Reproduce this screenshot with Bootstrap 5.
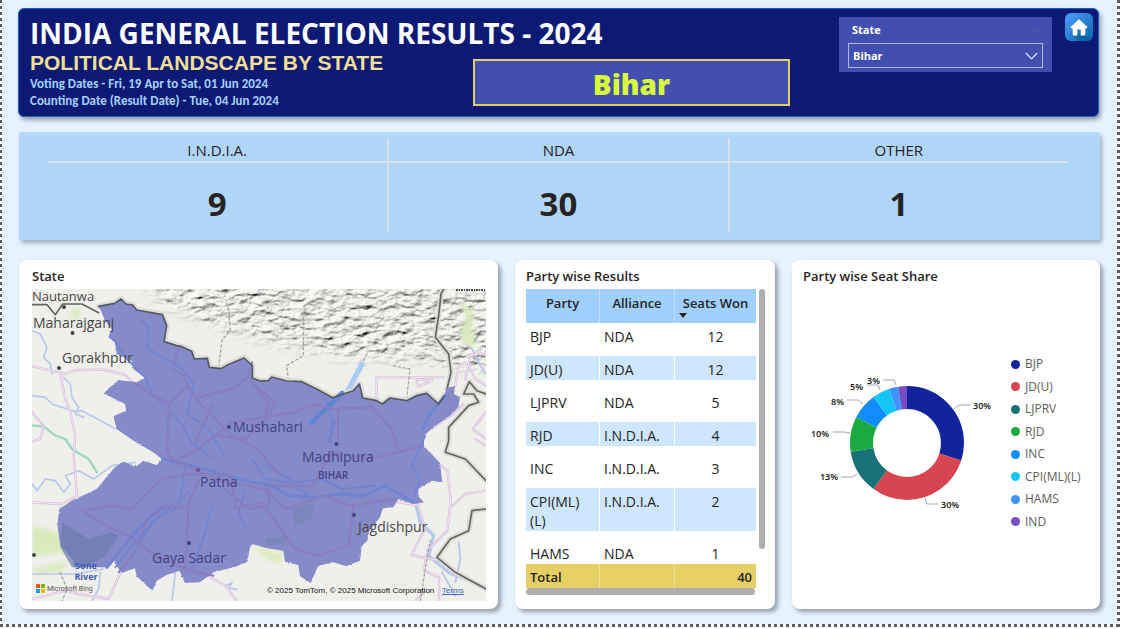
<!DOCTYPE html>
<html lang="en">
<head>
<meta charset="utf-8">
<meta name="viewport" content="width=device-width, initial-scale=1">
<title>India General Election Results - 2024</title>
<link href="https://cdn.jsdelivr.net/npm/bootstrap@5.3.0/dist/css/bootstrap.min.css" rel="stylesheet">
<style>
  body { font-family: "Open Sans", "Noto Sans", sans-serif; color: #252423; background: #fff; }
  .canvas {
    --dot: #5c5c5c;
    min-height: calc(100vh - 2px);
    margin-right: 8px;
    padding: 8px 20px 18px 18px;
    background:
      repeating-linear-gradient(180deg, var(--dot) 0 3px, #fff 3px 6px) left top / 2px 100% no-repeat,
      repeating-linear-gradient(180deg, var(--dot) 0 3px, #fff 3px 6px) right top / 3px 100% no-repeat,
      repeating-linear-gradient(90deg, var(--dot) 0 3px, #fff 3px 6px) left bottom / 100% 3px no-repeat,
      #e6f2fe;
  }
  .banner {
    display: grid;
    grid-template-columns: 443fr 317fr 49px 213fr 13px 28px;
    grid-template-rows: 42px 1fr;
    height: 109px;
    margin-right: 1px;
    padding: 0 5px 0 11px;
    background: #0d1a75;
    border: 1px solid #0f62bd;
    border-radius: 6px;
    box-shadow: 2px 3px 4px rgba(80, 90, 110, .55);
  }
  .banner h1 { grid-column: 1 / 3; grid-row: 1; font-size: 28px; line-height: 48px; font-weight: 700; color: #fff; white-space: nowrap; }
  .subtitle { grid-column: 1; grid-row: 2; }
  .banner h2 { font: 700 21px/24px "Liberation Sans", Arial, sans-serif; color: #f0df94; white-space: nowrap; }
  .dates { font: 700 13px/17px Carlito, Lato, sans-serif; color: #a3d0fb; }
  .picked { grid-column: 2; grid-row: 2; height: 47px; background: #424fb0; border: 2px solid #e6cd62; color: #d9fb3c; font-size: 28px; line-height: 46px; font-weight: 800; }
  .slicer { grid-column: 4; grid-row: 1 / 3; height: 55px; margin-top: 8px; padding: 4px 9px; background: #424fb0; color: #fff; font-size: 11px; line-height: 18px; font-weight: 700; }
  .slicer .form-select {
    height: 25px; padding: 0 24px 0 4px; border: 1px solid #b3b8dc; border-radius: 0; color: #fff;
    background-color: transparent; font-size: 11px; font-weight: 700; line-height: 23px;
    background-image: url("data:image/svg+xml,%3Csvg xmlns='http://www.w3.org/2000/svg' viewBox='0 0 14 8'%3E%3Cpath d='M1 1l6 6 6-6' fill='none' stroke='%23fff' stroke-width='1.2'/%3E%3C/svg%3E");
    background-size: 13px 8px; background-position: right 4px center;
  }
  .slicer option { color: #252423; }
  .home { grid-column: 6; grid-row: 1; width: 28px; height: 28px; margin-top: 4px; border-radius: 6px; overflow: hidden; }
  .kpis {
    display: grid; grid-template-columns: repeat(3, 1fr);
    height: 108px; margin: 15px 0 20px 1px; padding: 6px 32px 9px 28px;
    background: linear-gradient(#b5dbff, #afd5f7 6px); border-radius: 2px;
    box-shadow: 2px 3px 4px rgba(80, 90, 110, .45);
  }
  .kpi + .kpi { border-left: 2px solid #d9dfe6; }
  .kpi .cap { font-size: 15px; line-height: 24px; height: 25px; border-bottom: 2px solid #d6e2ef; }
  .kpi .num { height: 68px; font-size: 33px; line-height: 82px; font-weight: 700; }
  .panels { display: grid; grid-template-columns: 479fr 260fr 308fr; gap: 17px; margin-left: 1px; }
  .panel { height: 349px; padding: 6px 12px 6px 13px; background: #fff; border-radius: 8px; box-shadow: 3px 3px 4px rgba(80, 90, 110, .55); }
  .panel h3 { padding-bottom: 2px; font-size: 13px; line-height: 21px; font-weight: 600; }
  .panel-table { padding: 6px 10px 6px 11px; }
  .panel-share { padding: 6px 11px; }
  .map { display: block; width: 100%; height: 312px; }
  .results { width: 230px; table-layout: fixed; border-collapse: separate; border-spacing: 0; font-size: 14px; line-height: 19px; }
  .results th, .results td { padding: 4px 4px 1px; vertical-align: top; }
  .results th + th, .results td + td { border-left: 1px solid rgba(255, 255, 255, .35); }
  .results tbody td { border-bottom: 9px solid #fff; background-clip: padding-box; }
  .results tbody tr:last-child td { border-bottom: 0; }
  .results thead th { height: 34px; padding: 5px 0 0; background-color: #a0d0ff; font-size: 13px; font-weight: 600; text-align: center; }
  .results tbody tr:nth-child(even) td { background-color: #cfe7fe; }
  .results tfoot td { background-color: #e6d066; font-size: 13px; font-weight: 600; }
  .results .w-party { width: 73px; }
  .results .w-alliance { width: 75px; }
  .sort { position: absolute; left: 4px; top: 24px; width: 0; border: 4px solid transparent; border-top: 5px solid #252423; border-bottom: 0; }
  .bar-v { width: 6px; height: 260px; border-radius: 3px; background: #aeaeae; }
  .bar-h { width: 229px; height: 7px; border-radius: 4px; background: #aeaeae; }
  .share { height: 312px; gap: 20px; }
  .share svg { width: 188px; height: 146px; }
  .legend-list { height: 178px; font-size: 12px; line-height: 20px; color: #605e5c; }
  .legend-list i { width: 9px; height: 9px; border-radius: 50%; }
  .legend-list li { gap: 5px; }
</style>
</head>
<body>
<main class="canvas">
  <header class="banner">
    <h1 class="m-0">INDIA GENERAL ELECTION RESULTS - 2024</h1>
    <div class="subtitle">
      <h2 class="m-0">POLITICAL LANDSCAPE BY STATE</h2>
      <div class="dates">Voting Dates - Fri, 19 Apr to Sat, 01 Jun 2024<br>Counting Date (Result Date) - Tue, 04 Jun 2024</div>
    </div>
    <div class="picked text-center mt-2">Bihar</div>
    <div class="slicer">
      <div class="d-flex justify-content-between align-items-center mb-1">
        <label for="state" class="ps-1">State</label>
        <svg class="me-1" width="9" height="5" viewBox="0 0 9 5" fill="none" stroke="#59608f" aria-hidden="true"><path d="M.5.5l4 4 4-4"/></svg>
      </div>
      <select id="state" class="form-select"><option>Bihar</option></select>
    </div>
    <a class="home" href="#" aria-label="Home">
      <svg class="d-block" width="28" height="28" viewBox="0 0 28 28">
        <defs><linearGradient id="hg" x1="0" y1="0" x2="1" y2="1"><stop offset="0" stop-color="#4f9dfc"/><stop offset="1" stop-color="#0765a8"/></linearGradient></defs>
        <rect width="28" height="28" fill="url(#hg)"/>
        <path d="M20 22 26 28H13L8 22V21h12z" fill="#06578f" opacity=".5"/>
        <path d="M14 6.500 22.300 14.200 20.800 15.600 20 15V21.500q0 .8-.8.8H16v-5q0-1.300-2-1.300t-2 1.300v5H8.800q-.8 0-.8-.8V15l-.8.6-1.500-1.400z" fill="#fff" stroke="#fff" stroke-width=".6" stroke-linejoin="round"/>
      </svg>
    </a>
  </header>

  <section class="kpis text-center" aria-label="Seats by alliance">
    <div class="kpi"><div class="cap">I.N.D.I.A.</div><div class="num">9</div></div>
    <div class="kpi"><div class="cap">NDA</div><div class="num">30</div></div>
    <div class="kpi"><div class="cap">OTHER</div><div class="num">1</div></div>
  </section>

  <div class="panels">
    <section class="panel">
      <h3 class="m-0">State</h3>
      <svg class="map" viewBox="0 0 454 312" preserveAspectRatio="xMidYMid slice" role="img" aria-label="Map of Bihar">
        <defs>
          <filter id="relief" x="0" y="0" width="1" height="1">
            <feTurbulence type="fractalNoise" baseFrequency=".08 .16" numOctaves="4" seed="8"/>
            <feColorMatrix values="0 0 0 0 0  0 0 0 0 0  0 0 0 0 0  .6 .4 0 0 0"/>
            <feDiffuseLighting surfaceScale="7" lighting-color="#eeeeea" diffuseConstant="1.15"><feDistantLight azimuth="235" elevation="56"/></feDiffuseLighting>
          </filter>
          <filter id="soft" x="-.2" y="-.2" width="1.400" height="1.400"><feGaussianBlur stdDeviation="7"/></filter>
          <filter id="rough" x="-.05" y="-.05" width="1.100" height="1.100">
            <feTurbulence type="fractalNoise" baseFrequency=".25" numOctaves="2" seed="3"/>
            <feDisplacementMap in="SourceGraphic" scale="7" xChannelSelector="R" yChannelSelector="G"/>
          </filter>
          <mask id="hills"><path filter="url(#soft)" fill="#ddd" d="M115-20H480V82L420 78 390 70 320 68 260 56 210 44 160 26 125 12z"/></mask>
          <path id="north" d="M200 52 249 43 267 30 282 45 302 48 314 63 391 77 404 110 396 158 434 170 449 173 479 187 487 210 526 208 532 235 568 239 584 229 636 207 661 230V267L684 276 709 275 719 264 764 276 809 278 854 300 902 326 934 315 964 305 982 285 992 327 1034 335 1051 345 1074 327 1124 335 1154 320 1184 313 1220 345 1237 320"/>
          <path id="bihar" d="M200 52 249 43 267 30 282 45 302 48 314 63 391 77 404 110 396 158 434 170 449 173 479 187 487 210 526 208 532 235 568 239 584 229 636 207 661 230V267L684 276 709 275 719 264 764 276 809 278 854 300 902 326 934 315 964 305 982 285 992 327 1034 335 1051 345 1074 327 1124 335 1154 320 1184 313 1220 345 1237 320 1244 297 1269 291 1266 315 1284 325 1279 355 1254 380 1204 415 1176 440 1176 475 1199 495 1224 522 1231 580 1199 575 1159 600V622L1176 640 1144 645 1099 630 1084 655 1052 658 1044 685 1009 730 1006 755 989 770 984 815 944 832 904 820 859 830 836 882 804 862 799 828 759 818 754 785 704 778 664 766 656 768 644 820 604 835 544 850 504 880 459 882 442 845 404 858 374 875 361 905 314 862 309 838 269 852 244 815 229 835H126L124 815 84 765 76 705 82 660 119 635 194 600 249 535 274 518 314 532 334 515 374 528 391 510 364 490 309 458 254 420 244 382 282 365 279 345 249 330 216 313 234 295 259 273 314 280 339 267 304 240 299 215 254 195 249 160 229 145 239 120 219 95 209 70z"/>
        </defs>
        <rect width="454" height="312" fill="#efefeb"/>
        <g mask="url(#hills)"><rect width="454" height="110" filter="url(#relief)"/></g>
        <g transform="scale(.33333)" fill="none" stroke-linejoin="round" stroke-linecap="round">
          <g fill="#d9ebbd" stroke="none" filter="url(#soft)">
            <path d="M118 65l22-8 8 20-18 14-15-6z"/><path d="M1280 40l45 20-5 60 15 60-45-20-5-50 20-20z"/>
            <path d="M0 710l80 20 40 60-120 10z"/><path d="M0 840l110-25-20 30-70 12z"/><path d="M665 770l90 25-10 30-50-20z"/>
          </g>
          <g stroke="#b9c9ea" stroke-width="5">
            <path d="M0 320 40 325 60 345 130 368 150 365 230 408 250 420M0 585 15 605 40 570 70 575 95 610 115 585 100 560 140 545 185 570 240 530 310 520M0 125l25 10 20 40-10 30 20 20 5 30"/>
            <path d="M95 265l20 20 5 40 20 30-10 20 25 10M0 855h130l85-15M205 850l-5 50-20 36M430 850l-10 86M580 890l20-8-10 15 25 5"/>
            <path d="M1150 640l15 60 40 40-15 60 60 50 112 45" stroke-width="10"/>
            <path d="M1230 850l40 70M1280 760l5 50-15 70M1320 180l25 50 17 25" stroke-width="6"/>
          </g>
          <path d="M0 410 35 412 70 440 100 450 120 480 170 510 195 550" stroke="#9ed6c4" stroke-width="7"/>
          <g stroke="#d7bcdb" stroke-width="7">
            <path id="rw" d="M0 232 70 248 100 255 130 243 215 242 280 258 310 285M85 255 100 330 115 370 130 440 125 500 130 560 135 620 90 645 0 640M0 370l35 40-10 40-25 8"/>
            <path id="rs" d="M0 930l20-5 80-20 40 10 90 15 40-90 30-30M510 850l70 40 35 46M1034 335V265h200M1150 270l50 5-40 18zM1300 270l15-70 47-10M1310 230l20 40 32 20M1270 290l10-60 20-10"/>
            <path id="re" d="M1176 475l30 40 40 30 10 90-10 90-60 60-10 60 45 20v71M1099 640l60 8 20 70-40 80 70 15M1250 660l50-45 62-10M1362 370l-40 50 40 30M1150 936l30-30M1204 415l60-40 30-30M1330 450l32 22"/>
          </g>
          <g stroke="#f3eaf3" stroke-width="3"><use href="#rw"/><use href="#rs"/><use href="#re"/></g>
          <path d="M560 234l10-80 25-30-5-60-8-30M814 70v130l-50 30 5 40M1005 195l-10 20M1124 330l10-90-50-10M85 850l20 50-15 36M1165 936l20-130 10-50" stroke="#a5a5a5" stroke-width="4" stroke-dasharray="7 8"/>
          <path d="M990 225l-45 85" stroke="#abcdf3" stroke-width="16"/>
          <use href="#north" stroke="#dcdcd6" stroke-width="18"/>
          <g stroke="#dcdcd6" stroke-width="16"><path d="M1235 0 1227 15 1220 80 1210 145 1250 195 1257 250 1245 300"/><path d="M1362 315 1335 305 1312 278 1295 315 1325 315 1340 340 1310 350 1250 415 1250 455 1240 490 1300 510 1362 575M1362 660 1320 665 1310 725 1255 750 1215 805 1270 850 1362 900"/></g>
          <g stroke="#646464" stroke-width="5">
            <path d="M0 47h45l25 30 22-32H150l50 26M1235 0 1227 15 1220 80 1210 145 1250 195 1257 250 1245 300"/>
            <path d="M1362 315 1335 305 1312 278 1295 315 1325 315 1340 340 1310 350 1250 415 1250 455 1240 490 1300 510 1362 575M1362 660 1320 665 1310 725 1255 750 1215 805 1270 850 1362 900"/>
          </g>
          <use href="#bihar" fill="#858bc8" stroke="none" filter="url(#rough)"/>
          <path d="M90 700l80 50 70-20 20 10-40 60-60 35h-40l-35-60z" fill="#6a7cae" opacity=".7" stroke="none"/>
          <path d="M780 660l70-20-10 50-50 20zM700 750l60-10 5 20-60 10z" fill="#7385b2" opacity=".6" stroke="none"/>
          <g stroke="#7084cf" stroke-width="5">
            <path d="M330 95l20 20-5 60 30 20 70 40 40 50-20 90 60 40 50 80M240 145l40 60 60 60 20 50 90 90 30 60 60 40"/>
            <path d="M250 835l60-80 70-70 60-30 20-120M300 800l60-100 110-90M540 650l-20 80-40 110M640 600l-20 70 20 50M880 330l20 60-5 70M1180 440l-40 90 25 50-20 40"/>
            <path d="M391 510 500 535 580 560 640 575 720 590 770 620 850 625 930 615 990 622 1060 590 1144 640" stroke-width="9"/>
            <path d="M225 835 310 730 370 670 395 655M1240 320 1190 380 1172 420" stroke-width="9"/>
            <path d="M910 397l-20 60M660 510l40 60 70 10 60 40M700 530l90 50 80-10 60 30 100-10" stroke-width="6"/>
          </g>
          <path d="M930 312l-92 90" stroke="#6285d6" stroke-width="14"/>
          <g stroke="#8777b9" stroke-width="6">
            <path id="i1" d="M310 285 350 310 412 345 450 305 470 295 455 260 420 240 440 180M412 345 405 480 420 510 560 575 700 600 760 660 880 620 950 650 1090 630"/>
            <path id="i2" d="M470 295l30 45 60 60 20 25 100 60 60 70M500 325 600 300 650 265 710 345 700 385 600 400 500 480 440 510M700 385 790 370 850 345 900 360 1020 355 1080 420 1100 490 1010 510 900 490 840 590 720 590"/>
            <path id="i3" d="M150 665 240 650 300 660 390 570 470 555 600 560 610 660M150 665 230 715 290 740 370 800 460 840 470 640 500 575M460 840 544 860M320 780 340 700 400 650 470 660M610 660 690 640 760 740 790 780 860 800 950 770 965 650M260 850 310 790"/>
            <path id="i4" d="M560 440 640 450 700 390M650 265 660 220M918 360V450M680 300l50 40-20 40M580 600l70 60 60-10v-60M1100 490l70-20M490 460 540 350"/>
          </g>
          <g stroke="#8b89c5" stroke-width="2"><use href="#i1"/><use href="#i2"/><use href="#i3"/><use href="#i4"/></g>
          <use href="#north" stroke="#555967" stroke-width="5"/>
        </g>
        <g fill="#474747" font-family="Open Sans, Noto Sans, sans-serif" font-size="14" font-weight="500">
          <text x="0" y="12" font-size="13">Nautanwa</text>
          <text x="1" y="39">Maharajganj</text>
          <text x="30" y="74">Gorakhpur</text>
          <text x="326" y="243">Jagdishpur</text>
          <g fill="#42437f">
            <text x="201" y="143">Mushahari</text><text x="270" y="173">Madhipura</text>
            <text x="168" y="198">Patna</text><text x="120" y="274">Gaya Sadar</text>
            <text x="286" y="190" font-size="10" font-weight="600">BIHAR</text>
          </g>
        </g>
        <path d="M424 1h29" stroke="#4a4a4a" stroke-width="2" stroke-dasharray="2 1 1 1"/>
        <g fill="#444"><circle cx="32" cy="18" r="2"/><circle cx="40.500" cy="44" r="2"/><circle cx="27" cy="79" r="2"/><circle cx="2" cy="266" r="2"/></g>
        <g fill="#40437c"><circle cx="197" cy="138" r="2"/><circle cx="304.500" cy="155" r="2"/><circle cx="322" cy="226" r="2"/><circle cx="157" cy="254" r="2"/></g><circle cx="166" cy="181" r="2" fill="#70508c"/>
        <g fill="#3f5cb8" font-family="Open Sans, Noto Sans, sans-serif" font-size="9" font-weight="700" text-anchor="middle"><text x="54" y="280">Sone</text><text x="54" y="291">River</text></g>
        <path d="M4 295h4v4H4z" fill="#f25022"/><path d="M9 295h4v4H9z" fill="#7fba00"/><path d="M4 300h4v4H4z" fill="#00a4ef"/><path d="M9 300h4v4H9z" fill="#ffb900"/>
        <text x="15" y="302" font-family="Roboto, sans-serif" font-size="7" fill="#555">Microsoft Bing</text>
        <g font-family="Liberation Sans, Arial, sans-serif" font-size="8">
          <text x="235" y="304" fill="#111">© 2025 TomTom, © 2025 Microsoft Corporation</text>
          <a href="#"><text x="410" y="304" fill="#3a63c0" text-decoration="underline">Terms</text></a>
        </g>
      </svg>
    </section>

    <section class="panel panel-table">
      <h3 class="m-0">Party wise Results</h3>
      <div class="d-flex justify-content-between">
        <table class="results">
          <thead><tr><th scope="col" class="w-party">Party</th><th scope="col" class="w-alliance">Alliance</th><th scope="col" class="position-relative">Seats Won<span class="sort"></span></th></tr></thead>
          <tbody>
            <tr><td>BJP</td><td>NDA</td><td class="text-center">12</td></tr>
            <tr><td>JD(U)</td><td>NDA</td><td class="text-center">12</td></tr>
            <tr><td>LJPRV</td><td>NDA</td><td class="text-center">5</td></tr>
            <tr><td>RJD</td><td>I.N.D.I.A.</td><td class="text-center">4</td></tr>
            <tr><td>INC</td><td>I.N.D.I.A.</td><td class="text-center">3</td></tr>
            <tr><td>CPI(ML)<br>(L)</td><td>I.N.D.I.A.</td><td class="text-center">2</td></tr>
            <tr><td>HAMS</td><td>NDA</td><td class="text-center">1</td></tr>
          </tbody>
          <tfoot><tr><td>Total</td><td></td><td class="text-end">40</td></tr></tfoot>
        </table>
        <div class="bar-v"></div>
      </div>
      <div class="bar-h"></div>
    </section>

    <section class="panel panel-share">
      <h3 class="m-0">Party wise Seat Share</h3>
      <div class="share d-flex align-items-center">
        <svg viewBox="0 0 188 146" role="img" aria-label="Seat share by party">
          <g fill="none" stroke-width="23" transform="translate(104 71) rotate(-90)">
            <circle r="45.500" pathLength="40" stroke="#12239e" stroke-dasharray="12 28"/>
            <circle r="45.500" pathLength="40" stroke="#d64550" stroke-dasharray="12 28" stroke-dashoffset="-12"/>
            <circle r="45.500" pathLength="40" stroke="#197278" stroke-dasharray="5 35" stroke-dashoffset="-24"/>
            <circle r="45.500" pathLength="40" stroke="#1aab40" stroke-dasharray="4 36" stroke-dashoffset="-29"/>
            <circle r="45.500" pathLength="40" stroke="#118dff" stroke-dasharray="3 37" stroke-dashoffset="-33"/>
            <circle r="45.500" pathLength="40" stroke="#15c6f4" stroke-dasharray="2 38" stroke-dashoffset="-36"/>
            <circle r="45.500" pathLength="40" stroke="#4092ff" stroke-dasharray="1 39" stroke-dashoffset="-38"/>
            <circle r="45.500" pathLength="40" stroke="#744ec2" stroke-dasharray="1 39" stroke-dashoffset="-39"/>
          </g>
          <path d="M151 37l5-4h11M122 126l2 6h11M54 102l-5 3H38M47 61l-6-1H30M60 32l-5-4H44M77 18l-2-5H64M93 13l-2-5H80" fill="none" stroke="#a6a6a6"/>
          <g font-family="Open Sans, Noto Sans, sans-serif" font-size="9" font-weight="600" fill="#111">
            <text x="170" y="37">30%</text><text x="138" y="136">30%</text>
            <g text-anchor="end"><text x="35" y="108">13%</text><text x="26" y="65">10%</text><text x="41" y="33">8%</text><text x="60" y="18">5%</text><text x="77" y="12">3%</text></g>
          </g>
        </svg>
        <ul class="legend-list list-unstyled d-flex flex-column justify-content-between m-0 mb-1 text-nowrap">
          <li class="d-flex align-items-center"><i style="background:#12239e"></i>BJP</li>
          <li class="d-flex align-items-center"><i style="background:#d64550"></i>JD(U)</li>
          <li class="d-flex align-items-center"><i style="background:#197278"></i>LJPRV</li>
          <li class="d-flex align-items-center"><i style="background:#1aab40"></i>RJD</li>
          <li class="d-flex align-items-center"><i style="background:#118dff"></i>INC</li>
          <li class="d-flex align-items-center"><i style="background:#15c6f4"></i>CPI(ML)(L)</li>
          <li class="d-flex align-items-center"><i style="background:#4092ff"></i>HAMS</li>
          <li class="d-flex align-items-center"><i style="background:#744ec2"></i>IND</li>
        </ul>
      </div>
    </section>
  </div>
</main>
<script src="https://cdn.jsdelivr.net/npm/bootstrap@5.3.0/dist/js/bootstrap.bundle.min.js"></script>
</body>
</html>
